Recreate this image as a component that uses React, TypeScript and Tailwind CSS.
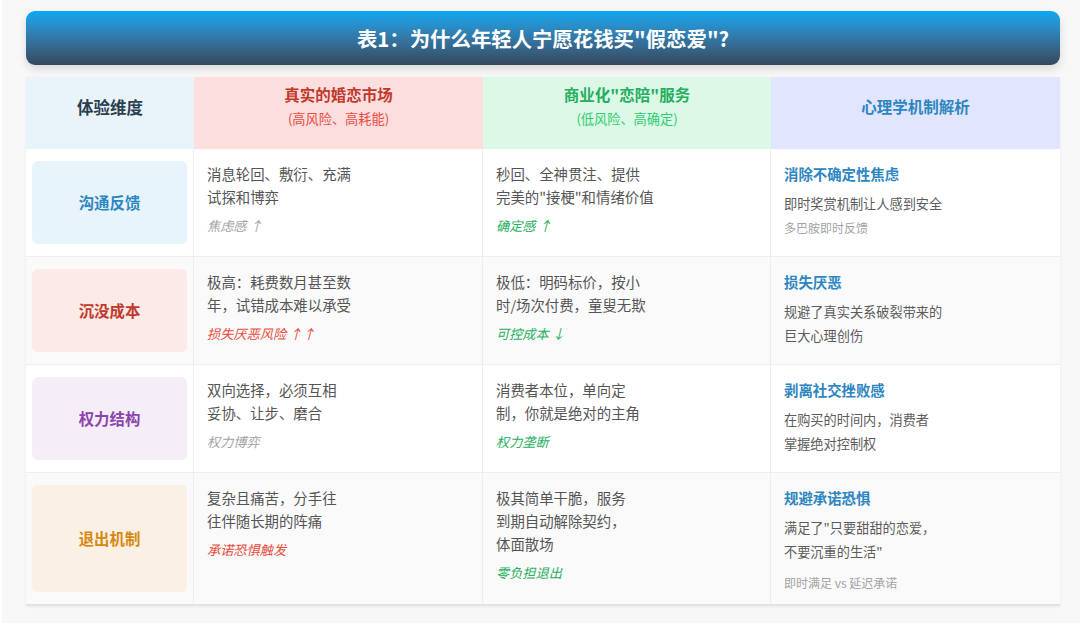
type Row = {
  dim: string
  badge: string
  rowBg: string
  real: string[]
  realTag: string
  realTagColor: string
  paid: string[]
  paidTag: string
  title: string
  desc: string[]
  note?: string
  noteGap?: string
}

const rows: Row[] = [
  {
    dim: "沟通反馈",
    badge: "bg-[#e8f4fc] text-[#2e86c1]",
    rowBg: "bg-white",
    real: ["消息轮回、敷衍、充满", "试探和博弈"],
    realTag: "焦虑感 ↑",
    realTagColor: "text-[#a3a3a3]",
    paid: ["秒回、全神贯注、提供", "完美的\"接梗\"和情绪价值"],
    paidTag: "确定感 ↑",
    title: "消除不确定性焦虑",
    desc: ["即时奖赏机制让人感到安全"],
    note: "多巴胺即时反馈",
    noteGap: "mt-[3px]",
  },
  {
    dim: "沉没成本",
    badge: "bg-[#fbeae8] text-[#c0392b]",
    rowBg: "bg-[#fafafa]",
    real: ["极高：耗费数月甚至数", "年，试错成本难以承受"],
    realTag: "损失厌恶风险 ↑↑",
    realTagColor: "text-[#e74c3c]",
    paid: ["极低：明码标价，按小", "时/场次付费，童叟无欺"],
    paidTag: "可控成本 ↓",
    title: "损失厌恶",
    desc: ["规避了真实关系破裂带来的", "巨大心理创伤"],
  },
  {
    dim: "权力结构",
    badge: "bg-[#f5eef8] text-[#8e44ad]",
    rowBg: "bg-white",
    real: ["双向选择，必须互相", "妥协、让步、磨合"],
    realTag: "权力博弈",
    realTagColor: "text-[#a3a3a3]",
    paid: ["消费者本位，单向定", "制，你就是绝对的主角"],
    paidTag: "权力垄断",
    title: "剥离社交挫败感",
    desc: ["在购买的时间内，消费者", "掌握绝对控制权"],
  },
  {
    dim: "退出机制",
    badge: "bg-[#faf0e3] text-[#d68910]",
    rowBg: "bg-[#fafafa]",
    real: ["复杂且痛苦，分手往", "往伴随长期的阵痛"],
    realTag: "承诺恐惧触发",
    realTagColor: "text-[#e74c3c]",
    paid: ["极其简单干脆，服务", "到期自动解除契约，", "体面散场"],
    paidTag: "零负担退出",
    title: "规避承诺恐惧",
    desc: ["满足了\"只要甜甜的恋爱，", "不要沉重的生活\""],
    note: "即时满足 vs 延迟承诺",
    noteGap: "mt-[10px]",
  },
]

function TextCell({ lines, tag, tagColor, last, bg }: { lines: string[]; tag: string; tagColor: string; last: boolean; bg: string }) {
  return (
    <div className={`${bg} border-r border-[#eeeeee] ${last ? "" : "border-b"} px-[13px] pt-[13px] pb-[12px]`}>
      {lines.map((l) => (
        <div key={l} className="text-[14.4px] leading-[23px] text-[#555555]">{l}</div>
      ))}
      <div className={`mt-[8px] text-[13.2px] leading-[20px] italic ${tagColor}`}>{tag}</div>
    </div>
  )
}

export default function App() {
  return (
    <div className="w-[1080px] h-[626px] bg-white font-['Noto_Sans_CJK_SC',sans-serif]">
      <div className="ml-[2px] h-[623px] bg-[#f8f8f8] pt-[11px] pl-[24px] pr-[20px]">
        <div className="h-[54px] rounded-[9px] bg-gradient-to-b from-[#03a9f4] to-[#34495e] shadow-[0_4px_10px_rgba(0,0,0,0.13)] flex items-center justify-center">
          <h1 className="text-white font-bold text-[20.4px] leading-none">表1：为什么年轻人宁愿花钱买"假恋爱"?</h1>
        </div>

        <div className="mt-[12px] grid grid-cols-[168px_289px_288px_289px] border-b-2 border-[#e3e3e3] shadow-[0_1px_3px_rgba(0,0,0,0.06)]">
          {/* header */}
          <div className="h-[72px] bg-[#e8f4f9] flex items-center justify-center pb-[12px]">
            <span className="text-[16.5px] font-bold text-[#2c3e50]">体验维度</span>
          </div>
          <div className="h-[72px] bg-[#fddedf] flex flex-col items-center justify-center pb-[14px]">
            <span className="text-[15.5px] leading-[22px] font-bold text-[#c0392b]">真实的婚恋市场</span>
            <span className="mt-[4px] text-[13.2px] leading-[20px] text-[#e74c3c]">(高风险、高耗能)</span>
          </div>
          <div className="h-[72px] bg-[#dcf8e6] flex flex-col items-center justify-center pb-[14px]">
            <span className="text-[15.5px] leading-[22px] font-bold text-[#27ae60]">商业化"恋陪"服务</span>
            <span className="mt-[4px] text-[13.2px] leading-[20px] text-[#2ecc71]">(低风险、高确定)</span>
          </div>
          <div className="h-[72px] bg-[#e1e6fe] flex items-center justify-center pb-[12px]">
            <span className="text-[15.5px] font-bold text-[#2e86c1]">心理学机制解析</span>
          </div>

          {rows.map((r, i) => {
            const last = i === rows.length - 1
            return (
              <div key={r.dim} className="contents">
                <div className={`${r.rowBg} border-r border-[#eeeeee] ${last ? "" : "border-b"} px-[6px] py-[12px] flex`}>
                  <div className={`${r.badge} flex-1 min-h-[83px] rounded-[6px] flex items-center justify-center text-[15.4px] font-bold`}>
                    {r.dim}
                  </div>
                </div>
                <TextCell lines={r.real} tag={r.realTag} tagColor={r.realTagColor} last={last} bg={r.rowBg} />
                <TextCell lines={r.paid} tag={r.paidTag} tagColor="text-[#27ae60]" last={last} bg={r.rowBg} />
                <div className={`${r.rowBg} ${last ? "" : "border-b"} border-[#eeeeee] px-[13px] pt-[14px] pb-[12px]`}>
                  <div className="text-[14.4px] leading-[22px] font-bold text-[#2e86c1]">{r.title}</div>
                  <div className="mt-[7px]">
                    {r.desc.map((d) => (
                      <div key={d} className="text-[13.2px] leading-[24px] text-[#5c5c5c]">{d}</div>
                    ))}
                  </div>
                  {r.note && (
                    <div className={`${r.noteGap} text-[12px] leading-[18px] text-[#a3a3a3]`}>{r.note}</div>
                  )}
                </div>
              </div>
            )
          })}
        </div>
      </div>
    </div>
  )
}
